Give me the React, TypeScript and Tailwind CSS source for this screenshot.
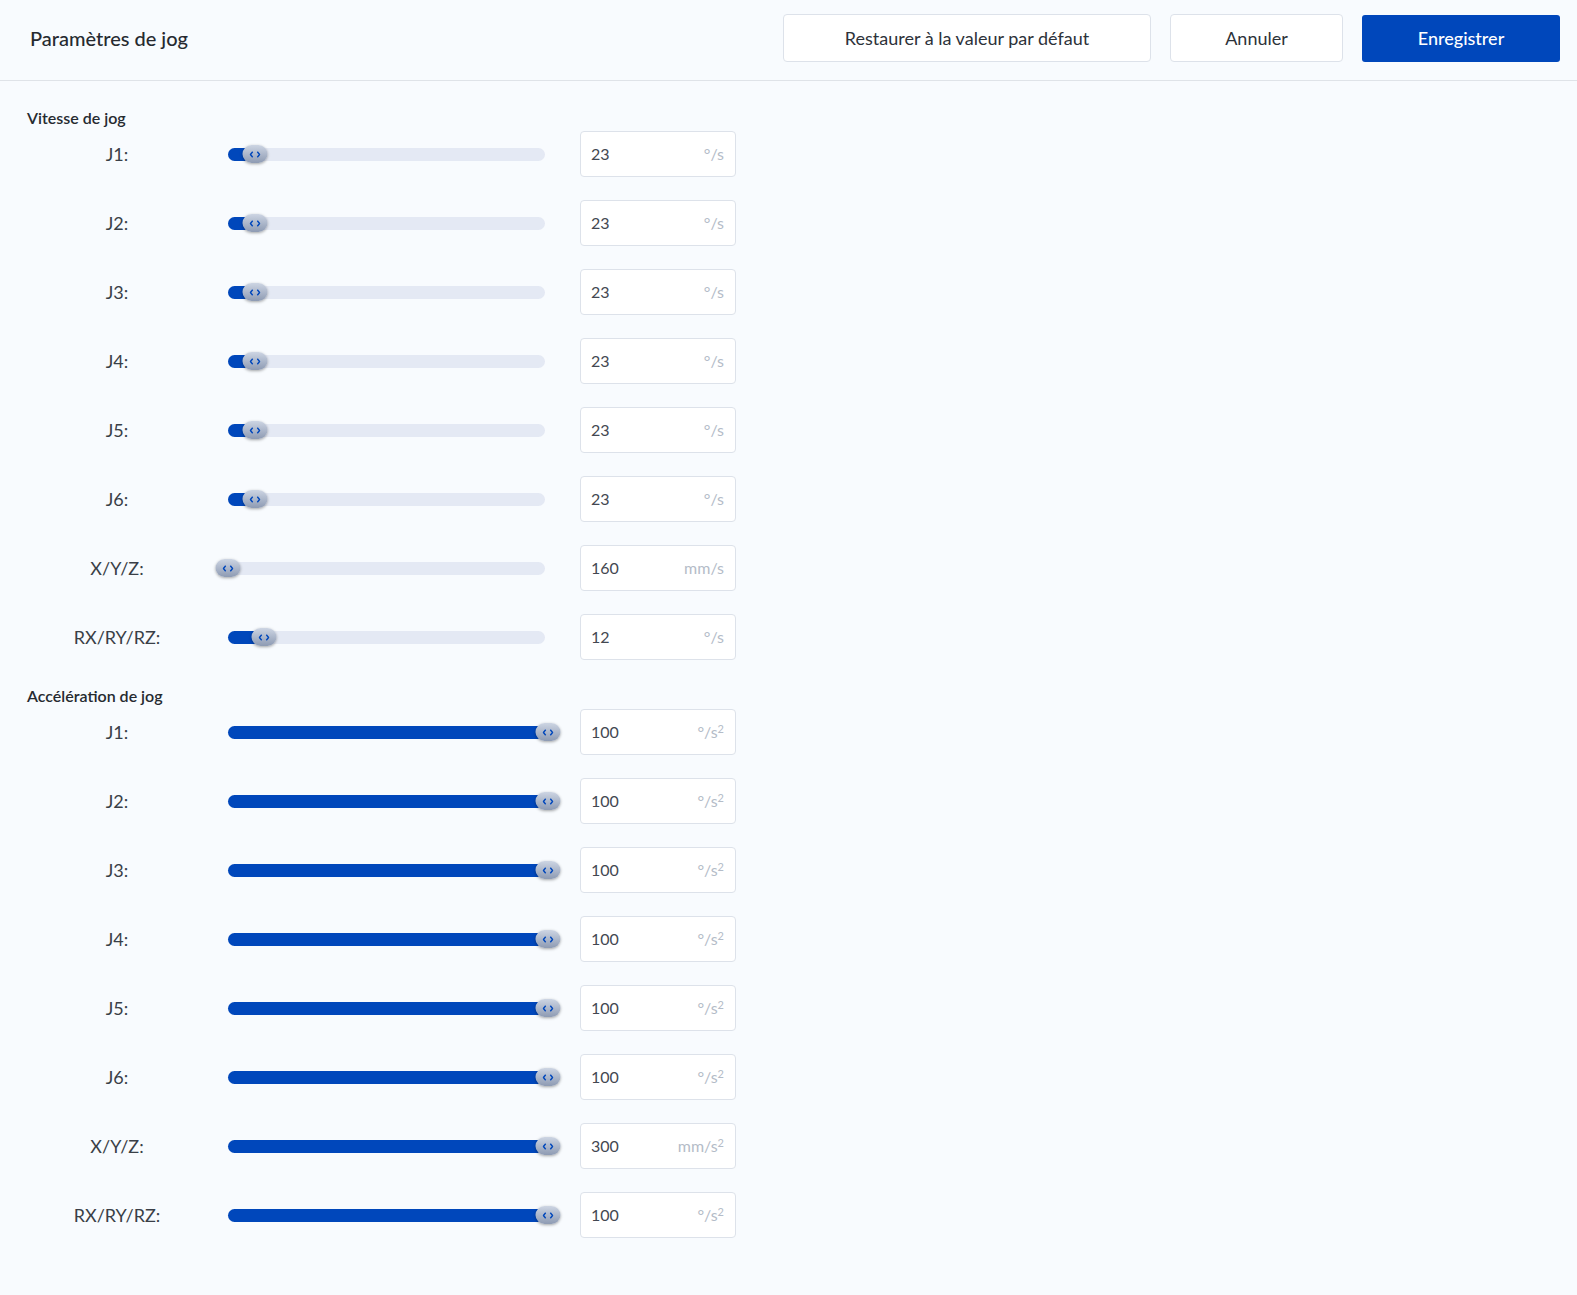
import React from "react";

type Row = { label: string; value: string; unit: React.ReactNode; pos: number };

const sq = <sup className="text-[11px]">2</sup>;

const speed: Row[] = [
  { label: "J1:", value: "23", unit: "°/s", pos: 27 },
  { label: "J2:", value: "23", unit: "°/s", pos: 27 },
  { label: "J3:", value: "23", unit: "°/s", pos: 27 },
  { label: "J4:", value: "23", unit: "°/s", pos: 27 },
  { label: "J5:", value: "23", unit: "°/s", pos: 27 },
  { label: "J6:", value: "23", unit: "°/s", pos: 27 },
  { label: "X/Y/Z:", value: "160", unit: "mm/s", pos: 0 },
  { label: "RX/RY/RZ:", value: "12", unit: "°/s", pos: 36 },
];

const accel: Row[] = [
  { label: "J1:", value: "100", unit: <>°/s{sq}</>, pos: 320 },
  { label: "J2:", value: "100", unit: <>°/s{sq}</>, pos: 320 },
  { label: "J3:", value: "100", unit: <>°/s{sq}</>, pos: 320 },
  { label: "J4:", value: "100", unit: <>°/s{sq}</>, pos: 320 },
  { label: "J5:", value: "100", unit: <>°/s{sq}</>, pos: 320 },
  { label: "J6:", value: "100", unit: <>°/s{sq}</>, pos: 320 },
  { label: "X/Y/Z:", value: "300", unit: <>mm/s{sq}</>, pos: 320 },
  { label: "RX/RY/RZ:", value: "100", unit: <>°/s{sq}</>, pos: 320 },
];

function Slider({ pos }: { pos: number }) {
  return (
    <div className="relative w-[317px] h-[13px]">
      <div className="absolute inset-0 rounded-full bg-[#e4e9f4]" />
      {pos > 0 && (
        <div
          className="absolute left-0 top-0 h-full rounded-full bg-[#0047bb]"
          style={{ width: `${pos}px` }}
        />
      )}
      <div
        className="absolute top-1/2 -translate-y-1/2 -translate-x-1/2 w-[25px] h-[18px] rounded-full bg-gradient-to-b from-[#cdd5e3] to-[#8e9bb3] shadow-[0_1px_3px_rgba(0,0,0,0.35)] flex items-center justify-center gap-[3px]"
        style={{ left: `${pos}px` }}
      >
        <svg width="4" height="7" viewBox="0 0 4 7">
          <path d="M3.2 0.8 L0.9 3.5 L3.2 6.2" stroke="#0047bb" strokeWidth="1.4" fill="none" />
        </svg>
        <svg width="4" height="7" viewBox="0 0 4 7">
          <path d="M0.8 0.8 L3.1 3.5 L0.8 6.2" stroke="#0047bb" strokeWidth="1.4" fill="none" />
        </svg>
      </div>
    </div>
  );
}

function SettingRow({ row }: { row: Row }) {
  return (
    <div className="flex items-center h-[46px]">
      <div className="w-[180px] text-center text-[18px] text-[#3a3f47]">{row.label}</div>
      <div className="ml-[21px]">
        <Slider pos={row.pos} />
      </div>
      <div className="ml-[35px] w-[156px] h-[46px] bg-white border border-[#dde2ea] rounded-[4px] flex items-center justify-between pl-[10px] pr-[11px]">
        <span className="text-[16px] text-[#434851]">{row.value}</span>
        <span className="text-[16px] text-[#b4bcc8]">{row.unit}</span>
      </div>
    </div>
  );
}

function Section({ title, rows }: { title: string; rows: Row[] }) {
  return (
    <div className="flex flex-col">
      <div className="text-[16px] font-semibold text-[#262a30] h-[20px] leading-[20px]">{title}</div>
      <div className="flex flex-col gap-[23px] mt-[3px]">
        {rows.map((r, i) => (
          <SettingRow key={i} row={r} />
        ))}
      </div>
    </div>
  );
}

export default function App() {
  return (
    <div
      className="min-h-[1295px] w-full bg-[#f8fbfe]"
      style={{ fontFamily: "Lato, 'Noto Sans', sans-serif" }}
    >
      <header className="h-[81px] border-b border-[#dfe3e8] flex items-center pl-[30px] pr-[17px] pb-[4px]">
        <h1 className="text-[20px] font-medium text-[#262a30]">Paramètres de jog</h1>
        <div className="ml-auto flex items-center gap-[19px]">
          <button className="h-[48px] w-[368px] bg-white border border-[#dde2ea] rounded-[4px] text-[18px] text-[#2d3239]">
            Restaurer à la valeur par défaut
          </button>
          <button className="h-[48px] w-[173px] bg-white border border-[#dde2ea] rounded-[4px] text-[18px] text-[#2d3239]">
            Annuler
          </button>
          <button className="h-[47px] w-[198px] bg-[#0047bb] rounded-[3px] text-[18px] text-white font-medium">
            Enregistrer
          </button>
        </div>
      </header>
      <main className="pl-[27px] pt-[27px] flex flex-col gap-[26px]">
        <Section title="Vitesse de jog" rows={speed} />
        <Section title="Accélération de jog" rows={accel} />
      </main>
    </div>
  );
}
